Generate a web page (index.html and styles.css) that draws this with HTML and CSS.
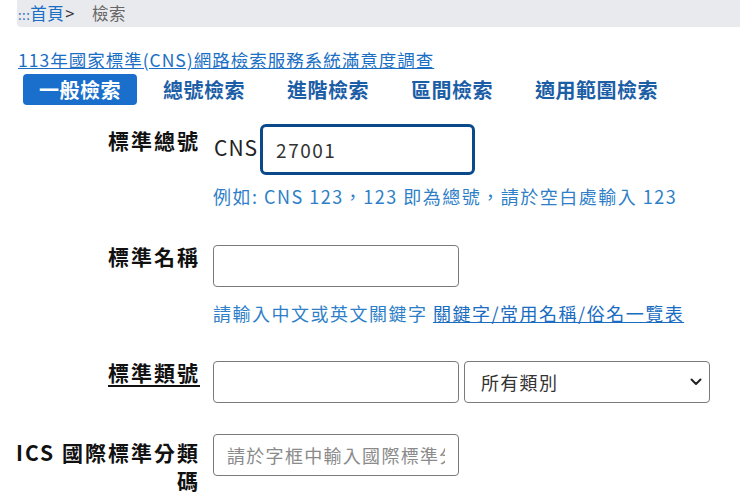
FILE: index.html
```html
<!DOCTYPE html>
<html lang="zh-Hant">
<head>
    <meta charset="UTF-8">
    <meta name="viewport" content="width=device-width, initial-scale=1.0">
    <title>檢索</title>
    <link rel="stylesheet" href="styles.css">
</head>
<body>
    <div class="breadcrumb">
        <a href="#" class="dots">:::</a><a href="#">首頁</a><span class="sep">&gt;</span><span class="current">檢索</span>
    </div>
    <div class="page">
        <a href="#" class="survey">113年國家標準(CNS)網路檢索服務系統滿意度調查</a>
        <ul class="tabs">
            <li><a href="#" class="active">一般檢索</a></li>
            <li><a href="#">總號檢索</a></li>
            <li><a href="#">進階檢索</a></li>
            <li><a href="#">區間檢索</a></li>
            <li><a href="#">適用範圍檢索</a></li>
        </ul>
        <form class="search-form">
            <div class="row row-number">
                <label for="cnsno">標準總號</label>
                <div class="field">
                    <div class="cns-line">
                        <span class="prefix">CNS</span>
                        <input type="text" id="cnsno" class="focused" value="27001">
                    </div>
                    <div class="hint">例如: CNS 123，123 即為總號，請於空白處輸入 123</div>
                </div>
            </div>
            <div class="row row-name">
                <label for="cnsname">標準名稱</label>
                <div class="field">
                    <input type="text" id="cnsname">
                    <div class="hint">請輸入中文或英文關鍵字 <a href="#">關鍵字/常用名稱/俗名一覽表</a></div>
                </div>
            </div>
            <div class="row row-class">
                <label for="cnsclass"><u>標準類號</u></label>
                <div class="field inline">
                    <input type="text" id="cnsclass">
                    <span class="select-wrap">
                        <select>
                            <option>所有類別</option>
                        </select>
                        <svg class="chevron" width="12" height="8" viewBox="0 0 12 8"><path d="M1.5 1.5 L6 6 L10.5 1.5" fill="none" stroke="#222" stroke-width="2" stroke-linecap="round" stroke-linejoin="round"/></svg>
                    </span>
                </div>
            </div>
            <div class="row row-ics">
                <label for="ics">ICS 國際標準分類碼</label>
                <div class="field">
                    <input type="text" id="ics" placeholder="請於字框中輸入國際標準分類碼">
                </div>
            </div>
        </form>
    </div>
</body>
</html>
```

FILE: styles.css
```css
body {
    margin: 0;
    padding: 0;
    font-family: "Noto Sans CJK TC", sans-serif;
    color: #222;
    background: #fff;
}
a {
    color: #1a6fc4;
}
.breadcrumb {
    margin-left: 17px;
    height: 27px;
    line-height: 27px;
    padding-left: 1px;
    background-color: #e9eaed;
    border-bottom-left-radius: 4px;
    font-size: 16.5px;
    letter-spacing: 0.5px;
}
.breadcrumb a {
    text-decoration: none;
}
.breadcrumb .dots {
    font-size: 13px;
}
.breadcrumb .sep {
    color: #333;
    margin-left: 1px;
    margin-right: 17px;
}
.breadcrumb .current {
    color: #666;
}
.page {
    padding-left: 18px;
}
.survey {
    display: inline-block;
    margin-top: 21px;
    font-size: 17.5px;
    letter-spacing: 1px;
    line-height: 24px;
}
.tabs {
    list-style-type: none;
    margin: 2px 0 0 5px;
    padding: 0;
    display: flex;
    gap: 10px;
}
.tabs li a {
    display: block;
    padding: 0 16px;
    line-height: 31px;
    font-size: 20px;
    font-weight: bold;
    letter-spacing: 0.5px;
    color: #1c5ea6;
    text-decoration: none;
    border-radius: 4px;
}
.tabs li a.active {
    background-color: #1a6fcc;
    color: #fff;
}
.search-form {
    margin-top: 19px;
}
.row {
    display: grid;
    grid-template-columns: 182px 1fr;
    column-gap: 13px;
    align-items: start;
}
.row label {
    text-align: right;
    font-size: 21px;
    font-weight: bold;
    letter-spacing: 2px;
    line-height: 28px;
    color: #111;
}
.row label u {
    text-underline-offset: 4px;
}
.field input {
    box-sizing: border-box;
    width: 246px;
    height: 42px;
    margin: 0;
    padding: 0 13px;
    border: 1px solid #7a7a7a;
    border-radius: 4px;
    font-family: inherit;
    font-size: 18px;
    letter-spacing: 1.3px;
    color: #333;
    background: #fff;
}
.field input::placeholder {
    color: #8a8a8a;
}
.hint {
    font-size: 18px;
    letter-spacing: 1.5px;
    line-height: 24px;
    color: #2f7fc8;
}
.hint a {
    color: #1a6cc0;
}
.row-number label {
    padding-top: 2px;
}
.cns-line {
    display: flex;
    align-items: center;
}
.prefix {
    font-size: 21px;
    letter-spacing: 1px;
    color: #222;
    margin-left: 1px;
    margin-right: 2px;
    padding-bottom: 6px;
}
.field input.focused {
    width: 215px;
    height: 51px;
    border: 3px solid #0b4a8a;
    border-radius: 6px;
    padding-left: 13px;
    font-size: 19px;
    letter-spacing: 1.5px;
}
.row-number .hint {
    margin-top: 9px;
}
.row-name {
    margin-top: 34px;
}
.row-name input {
    margin-top: 3px;
}
.row-name .hint {
    margin-top: 14px;
}
.row-class {
    margin-top: 33px;
}
.row-class input {
    margin-top: 3px;
}
.inline {
    display: flex;
    gap: 5px;
}
.select-wrap {
    position: relative;
    margin-top: 3px;
}
.select-wrap select {
    box-sizing: border-box;
    appearance: none;
    width: 246px;
    height: 42px;
    margin: 0;
    padding: 0 16px;
    border: 1px solid #7a7a7a;
    border-radius: 4px;
    font-family: inherit;
    font-size: 18px;
    letter-spacing: 1.3px;
    color: #333;
    background: #fff;
}
.chevron {
    position: absolute;
    right: 8px;
    top: 17px;
}
.row-ics {
    margin-top: 31px;
}
.row-ics label {
    padding-top: 4px;
    margin-left: -5px;
}
```
